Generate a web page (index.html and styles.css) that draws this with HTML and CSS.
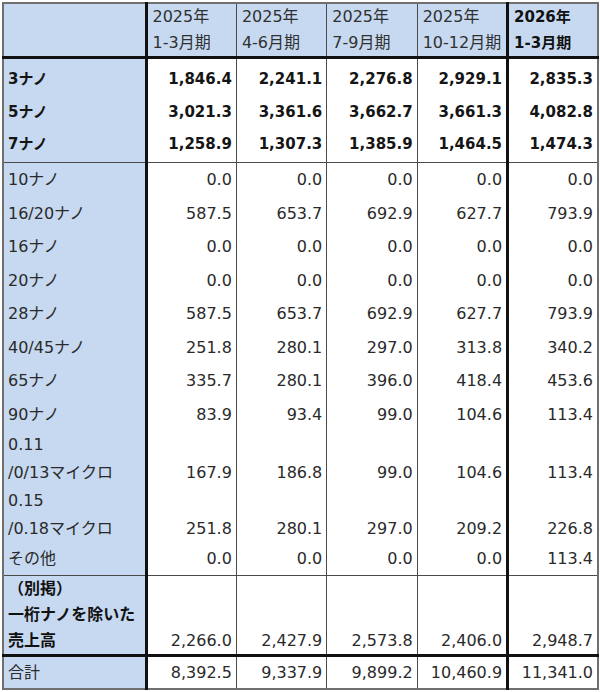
FILE: index.html
```html
<!DOCTYPE html>
<html lang="ja">
<head>
<meta charset="utf-8">
<title>ノード別売上高</title>
<link rel="stylesheet" href="styles.css">
</head>
<body>
<table class="sales">
  <colgroup>
    <col class="c-label">
    <col class="c-q"><col class="c-q"><col class="c-q"><col class="c-q"><col class="c-q">
  </colgroup>
  <thead>
    <tr class="r-head">
      <th class="lbl"></th>
      <th>2025年<br>1-3月期</th>
      <th>2025年<br>4-6月期</th>
      <th>2025年<br>7-9月期</th>
      <th>2025年<br>10-12月期</th>
      <th class="latest strong">2026年<br>1-3月期</th>
    </tr>
  </thead>
  <tbody class="g-bold">
    <tr class="first"><th class="lbl">3ナノ</th><td>1,846.4</td><td>2,241.1</td><td>2,276.8</td><td>2,929.1</td><td class="latest">2,835.3</td></tr>
    <tr><th class="lbl">5ナノ</th><td>3,021.3</td><td>3,361.6</td><td>3,662.7</td><td>3,661.3</td><td class="latest">4,082.8</td></tr>
    <tr><th class="lbl">7ナノ</th><td>1,258.9</td><td>1,307.3</td><td>1,385.9</td><td>1,464.5</td><td class="latest">1,474.3</td></tr>
  </tbody>
  <tbody class="g-main">
    <tr class="odd"><th class="lbl">10ナノ</th><td>0.0</td><td>0.0</td><td>0.0</td><td>0.0</td><td class="latest">0.0</td></tr>
    <tr class="even"><th class="lbl">16/20ナノ</th><td>587.5</td><td>653.7</td><td>692.9</td><td>627.7</td><td class="latest">793.9</td></tr>
    <tr class="odd"><th class="lbl">16ナノ</th><td>0.0</td><td>0.0</td><td>0.0</td><td>0.0</td><td class="latest">0.0</td></tr>
    <tr class="even"><th class="lbl">20ナノ</th><td>0.0</td><td>0.0</td><td>0.0</td><td>0.0</td><td class="latest">0.0</td></tr>
    <tr class="odd"><th class="lbl">28ナノ</th><td>587.5</td><td>653.7</td><td>692.9</td><td>627.7</td><td class="latest">793.9</td></tr>
    <tr class="even"><th class="lbl">40/45ナノ</th><td>251.8</td><td>280.1</td><td>297.0</td><td>313.8</td><td class="latest">340.2</td></tr>
    <tr class="odd"><th class="lbl">65ナノ</th><td>335.7</td><td>280.1</td><td>396.0</td><td>418.4</td><td class="latest">453.6</td></tr>
    <tr class="even"><th class="lbl">90ナノ</th><td>83.9</td><td>93.4</td><td>99.0</td><td>104.6</td><td class="latest">113.4</td></tr>
    <tr class="two"><th class="lbl">0.11<br>/0/13マイクロ</th><td>167.9</td><td>186.8</td><td>99.0</td><td>104.6</td><td class="latest">113.4</td></tr>
    <tr class="two"><th class="lbl">0.15<br>/0.18マイクロ</th><td>251.8</td><td>280.1</td><td>297.0</td><td>209.2</td><td class="latest">226.8</td></tr>
    <tr class="odd"><th class="lbl">その他</th><td>0.0</td><td>0.0</td><td>0.0</td><td>0.0</td><td class="latest">113.4</td></tr>
  </tbody>
  <tbody class="g-note">
    <tr><th class="lbl strong">（別掲）<br>一桁ナノを除いた<br>売上高</th><td>2,266.0</td><td>2,427.9</td><td>2,573.8</td><td>2,406.0</td><td class="latest">2,948.7</td></tr>
  </tbody>
  <tbody class="g-total">
    <tr><th class="lbl">合計</th><td>8,392.5</td><td>9,337.9</td><td>9,899.2</td><td>10,460.9</td><td class="latest">11,341.0</td></tr>
  </tbody>
</table>
</body>
</html>
```

FILE: styles.css
```css
html, body {
  margin: 0;
  padding: 0;
  background: #ffffff;
}

body {
  padding: 2px 0 0 2px;
  font-family: "DejaVu Sans", "Noto Sans CJK JP", sans-serif;
  font-size: 16px;
  color: #2a2a2a;
}

.sales {
  border-collapse: collapse;
  table-layout: fixed;
  width: 597px;
  border: 2px solid #6f6f6f;
}

.c-label { width: 143px; }

.sales th,
.sales td {
  padding: 0 4px 3px 4px;
  vertical-align: bottom;
  line-height: 27px;
  white-space: nowrap;
  font-weight: normal;
  border-left: 1px solid #4a4a4a;
}

.sales td { text-align: right; }

.sales th { text-align: left; }

.sales .lbl {
  background: #c6d9f0;
  border-right: 3px solid #111111;
  padding-left: 4px;
}

.sales .latest { border-left: 3px solid #111111; }

/* header */
.sales thead th {
  background: #c6d9f0;
  padding: 0 4px 0 5px;
  line-height: 26px;
  border-bottom: 3px solid #111111;
  color: #303030;
}

.sales .strong {
  font-weight: bold;
  color: #111111;
}

.sales thead .strong { font-size: 15px; color: #111111; }

/* 3/5/7 nano block */
.g-bold tr { height: 33px; }
.g-bold tr.first { height: 39px; }
.g-bold th,
.g-bold td {
  font-weight: bold;
  font-size: 15px;
  color: #151515;
  padding-bottom: 4px;
}

/* main block */
.g-main { border-top: 1px solid #4a4a4a; }
.g-main tr.odd { height: 33px; }
.g-main tr.even { height: 34px; }
.g-main tr.two { height: 56px; }
.g-main tr.two th,
.g-main tr.two td { line-height: 28px; padding-bottom: 0; }

/* note block */
.g-note { border-top: 1px solid #4a4a4a; }
.g-note tr { height: 78px; }
.g-note th,
.g-note td { padding-bottom: 0; line-height: 26px; }

/* total */
.g-total { border-top: 3px solid #111111; }
.g-total tr { height: 33px; }
.g-total th,
.g-total td { padding-bottom: 2px; }
```
